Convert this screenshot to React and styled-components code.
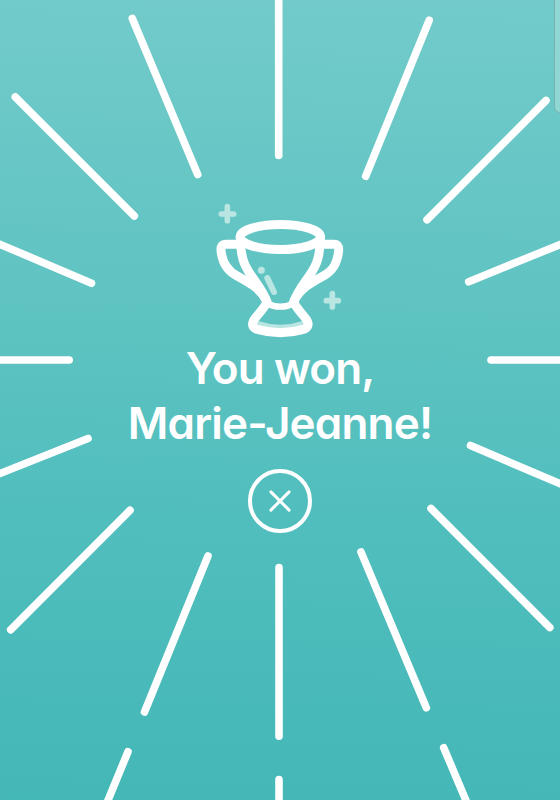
import React from 'react';
import styled, { createGlobalStyle } from 'styled-components';

const GlobalStyle = createGlobalStyle`
  * {
    box-sizing: border-box;
  }
  body {
    margin: 0;
    font-family: Inter, 'Liberation Sans', sans-serif;
  }
`;

// [x1, y1, x2, y2]
const rays = [
  [278.7, -10, 278.7, 155.5],
  [132.3, 18.5, 197.7, 174.5],
  [15.3, 97, 134.3, 216],
  [-10, 240, 91.5, 283.3],
  [-10, 360, 69.2, 360],
  [-10, 477.5, 88, 438.5],
  [130, 510.3, 10.7, 629.7],
  [208, 556, 144.5, 712],
  [279, 567.5, 279, 736.3],
  [361, 552, 426.3, 707.8],
  [431, 508.5, 549.8, 627.5],
  [470.5, 445.5, 570, 488],
  [491, 360, 570, 360],
  [468.7, 281.7, 570, 240.5],
  [427, 219.7, 546, 100.5],
  [365.7, 176.3, 429.2, 20.2],
  [128, 751.7, 104, 810],
  [279, 779.5, 279, 810],
  [443.7, 747.7, 470, 810],
];

const Rays = () => (
  <RaysSvg viewBox="0 0 560 800" aria-hidden="true">
    {rays.map(([x1, y1, x2, y2]) => (
      <line key={`${x1}-${y1}`} x1={x1} y1={y1} x2={x2} y2={y2} />
    ))}
  </RaysSvg>
);

const Trophy = () => (
  <TrophySvg viewBox="42 36 396 414" aria-hidden="true">
    <g stroke="#b9e5e2" strokeWidth="17">
      <path d="M82 50V92M64 72H101" />
      <path d="M397 311V351M379 332H415" />
      <path d="M184 241V241.1" strokeWidth="21" />
      <path d="M202 264L222 306" strokeWidth="18" />
      <path d="M172 399Q241 422 310 399" strokeWidth="13" />
    </g>
    <g stroke="#fff" strokeWidth="27">
      <ellipse cx="241" cy="141" rx="120.5" ry="37.5" />
      <path d="M121 141C121 215 140 238 166 274C184 299 194 318 201 335" />
      <path d="M361 141C361 215 342 238 316 274C298 299 288 318 281 335" />
      <path d="M203 339Q216 350 241 350Q266 350 279 339" strokeWidth="19" />
      <path d="M121 163H78Q62 163 63 180C66 220 82 242 110 257C145 276 182 296 198 330" />
      <path d="M361 163H402Q417 163 416 180C413 220 399 242 371 257C336 276 300 296 284 330" />
      <path d="M200 338C191 358 172 374 161 391Q151 412 172 418Q241 438 310 418Q331 412 321 391C310 374 291 358 282 338" />
    </g>
  </TrophySvg>
);

const App = () => {
  return (
    <Wrapper>
      <GlobalStyle />
      <Rays />
      <EdgePanel />
      <Content>
        <Trophy />
        <Title>
          You won,
          <br />
          <Name>Marie-Jeanne!</Name>
        </Title>
        <CloseButton type="button" aria-label="close">
          <svg width="24" height="24" viewBox="0 0 24 24">
            <path d="M2.9 2.9L21.1 21.1M21.1 2.9L2.9 21.1" />
          </svg>
        </CloseButton>
      </Content>
    </Wrapper>
  );
};

const Wrapper = styled.main`
  position: relative;
  width: 560px;
  height: 800px;
  overflow: hidden;
  background: linear-gradient(181deg, #72cbca 0%, #60c4c2 36%, #50bebd 65%, #44b7b7 100%);
`;

const RaysSvg = styled.svg`
  position: absolute;
  inset: 0;
  width: 100%;
  height: 100%;
  stroke: #fff;
  stroke-width: 7.6;
  stroke-linecap: round;
`;

const EdgePanel = styled.div`
  position: absolute;
  top: -10px;
  right: -20px;
  width: 26px;
  height: 123px;
  border: 1px solid #78b3b2;
  border-radius: 6px;
  background: #90d6d3;
`;

const Content = styled.section`
  position: relative;
  display: flex;
  flex-direction: column;
  align-items: center;
  padding-top: 202px;
`;

const TrophySvg = styled.svg`
  width: 132px;
  height: 138px;
  fill: none;
  stroke-linecap: round;
  stroke-linejoin: round;
`;

const Title = styled.h1`
  margin: 1px 0 0;
  color: #fff;
  font-size: 44px;
  font-weight: 580;
  line-height: 55px;
  letter-spacing: -0.9px;
  text-align: center;
  white-space: nowrap;
  font-feature-settings: 'cv11';
`;

const Name = styled.span`
  letter-spacing: -0.8px;
`;

const CloseButton = styled.button`
  display: grid;
  place-items: center;
  width: 64px;
  height: 64px;
  margin-top: 18px;
  padding: 0;
  border: 4px solid #fff;
  border-radius: 50%;
  background: none;

  svg {
    fill: none;
    stroke: #fff;
    stroke-width: 3;
    stroke-linecap: round;
  }
`;

export default App;
